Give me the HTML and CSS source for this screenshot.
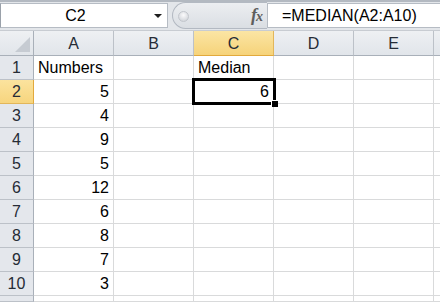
FILE: index.html
```html
<!DOCTYPE html>
<html lang="en">
<head>
    <meta charset="UTF-8">
    <meta name="viewport" content="width=device-width, initial-scale=1.0">
    <title>Median</title>
    <link rel="stylesheet" href="styles.css">
</head>
<body>
    <div class="formula-bar">
        <div class="name-box">
            <span class="cell-name">C2</span>
            <span class="drop-arrow"></span>
        </div>
        <div class="splitter">
            <span class="knob"></span>
            <span class="fx">f<i>x</i></span>
        </div>
        <div class="formula">=MEDIAN(A2:A10)</div>
    </div>

    <div class="sheet">
        <div class="head corner"><span class="corner-mark"></span></div>
        <div class="head col">A</div>
        <div class="head col">B</div>
        <div class="head col active-col">C</div>
        <div class="head col">D</div>
        <div class="head col">E</div>
        <div class="head col last"></div>

        <div class="row-num">1</div>
        <div class="cell">Numbers</div><div class="cell"></div><div class="cell">Median</div><div class="cell"></div><div class="cell"></div><div class="cell last"></div>

        <div class="row-num active-row">2</div>
        <div class="cell num">5</div><div class="cell"></div><div class="cell num">6</div><div class="cell"></div><div class="cell"></div><div class="cell last"></div>

        <div class="row-num">3</div>
        <div class="cell num">4</div><div class="cell"></div><div class="cell"></div><div class="cell"></div><div class="cell"></div><div class="cell last"></div>

        <div class="row-num">4</div>
        <div class="cell num">9</div><div class="cell"></div><div class="cell"></div><div class="cell"></div><div class="cell"></div><div class="cell last"></div>

        <div class="row-num">5</div>
        <div class="cell num">5</div><div class="cell"></div><div class="cell"></div><div class="cell"></div><div class="cell"></div><div class="cell last"></div>

        <div class="row-num">6</div>
        <div class="cell num">12</div><div class="cell"></div><div class="cell"></div><div class="cell"></div><div class="cell"></div><div class="cell last"></div>

        <div class="row-num">7</div>
        <div class="cell num">6</div><div class="cell"></div><div class="cell"></div><div class="cell"></div><div class="cell"></div><div class="cell last"></div>

        <div class="row-num">8</div>
        <div class="cell num">8</div><div class="cell"></div><div class="cell"></div><div class="cell"></div><div class="cell"></div><div class="cell last"></div>

        <div class="row-num">9</div>
        <div class="cell num">7</div><div class="cell"></div><div class="cell"></div><div class="cell"></div><div class="cell"></div><div class="cell last"></div>

        <div class="row-num">10</div>
        <div class="cell num">3</div><div class="cell"></div><div class="cell"></div><div class="cell"></div><div class="cell"></div><div class="cell last"></div>

        <div class="row-num"></div>
        <div class="cell"></div><div class="cell"></div><div class="cell"></div><div class="cell"></div><div class="cell"></div><div class="cell last"></div>

        <div class="selection"><span class="fill-handle"></span></div>
    </div>
</body>
</html>
```

FILE: styles.css
```css
body {
    margin: 0;
    width: 440px;
    height: 302px;
    overflow: hidden;
    background-color: #ffffff;
    font-family: 'Liberation Sans', Arial, sans-serif;
    font-size: 16px;
    color: #000000;
}

/* formula bar */
.formula-bar {
    display: flex;
    align-items: center;
    height: 31px;
    box-sizing: border-box;
    border-top: 2px solid #b3b9c1;
    border-bottom: 1px solid #c8ccd2;
    background-color: #e3e6ea;
    padding: 1px 0 2px;
}

.name-box {
    display: flex;
    align-items: center;
    width: 168px;
    height: 25px;
    box-sizing: border-box;
    background-color: #ffffff;
    border: 1px solid #b6bcc4;
    border-left: 1px solid #9aa1aa;
}

.cell-name {
    flex: 1;
    text-align: center;
    padding-right: 4px;
}

.drop-arrow {
    width: 0;
    height: 0;
    margin-right: 5px;
    border-left: 4px solid transparent;
    border-right: 4px solid transparent;
    border-top: 4px solid #1e1e1e;
}

.splitter {
    position: relative;
    display: flex;
    align-items: center;
    justify-content: flex-end;
    margin-left: 4px;
    width: 95px;
    height: 27px;
    box-sizing: border-box;
    border: 1px solid #b3b9c2;
    border-right: none;
    border-radius: 14px 0 0 14px;
    background: linear-gradient(#eceef1, #dadee3);
}

.knob {
    position: absolute;
    left: 5px;
    top: 8px;
    width: 9px;
    height: 9px;
    border-radius: 50%;
    background: radial-gradient(circle at 50% 35%, #fbfbfc, #c9cdd3);
    border: 1px solid #c2c6cc;
}

.fx {
    font-family: 'Liberation Serif', serif;
    font-style: italic;
    font-weight: bold;
    font-size: 18px;
    color: #5e5e5e;
    margin-right: 5px;
    letter-spacing: -1px;
}

.fx i {
    font-size: 14px;
}

.formula {
    flex: 1;
    height: 25px;
    box-sizing: border-box;
    background-color: #ffffff;
    border: 1px solid #b6bcc4;
    border-right: none;
    padding-left: 14px;
    line-height: 23px;
}

/* grid */
.sheet {
    position: relative;
    display: grid;
    grid-template-columns: 34px repeat(5, 80px) 1fr;
    grid-template-rows: 25px repeat(10, 24px) 6px;
}

.head,
.row-num,
.cell {
    box-sizing: border-box;
    border-right: 1px solid #d9dadb;
    border-bottom: 1px solid #d9dadb;
    display: flex;
    align-items: center;
    padding: 1px 4px 0;
    white-space: nowrap;
    overflow: hidden;
}

.head {
    justify-content: center;
    background: linear-gradient(#eef0f3, #e1e5ea);
    border-right-color: #bcc1c8;
    border-bottom-color: #a9b0b9;
    color: #262c36;
}

.row-num {
    justify-content: center;
    background-color: #e4e7ec;
    border-right-color: #a9b0b9;
    border-bottom-color: #bcc1c8;
    color: #262c36;
}

.corner {
    position: relative;
    border-right-color: #a9b0b9;
}

.corner-mark {
    position: absolute;
    right: 3px;
    bottom: 3px;
    width: 0;
    height: 0;
    border-left: 15px solid transparent;
    border-bottom: 15px solid #c6cbd2;
}

.active-col {
    background: linear-gradient(#fbe5a4, #f6d37a);
    border-bottom: 1px solid #e2a93c;
    border-right-color: #e2b65a;
}

.active-row {
    background: linear-gradient(#fbe39e, #f7d57e);
    border-right: 1px solid #e2a93c;
    border-bottom-color: #e2b65a;
}

.num {
    justify-content: flex-end;
}

.last {
    border-right: none;
}

.selection {
    position: absolute;
    left: 192px;
    top: 47px;
    width: 84px;
    height: 27px;
    box-sizing: border-box;
    border: 3px solid #000000;
}

.fill-handle {
    position: absolute;
    right: -5px;
    bottom: -5px;
    width: 6px;
    height: 6px;
    background-color: #000000;
    border-left: 1px solid #ffffff;
    border-top: 1px solid #ffffff;
}
```
